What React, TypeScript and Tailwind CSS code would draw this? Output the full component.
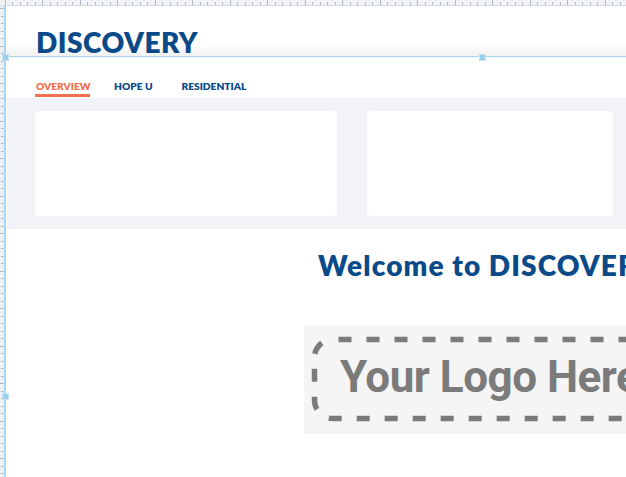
import React from "react";

const BLUE = "#0b4a89";

function TopRuler() {
  const ticks = Array.from({ length: 90 }, (_, i) => i);
  return (
    <svg width="626" height="6" className="block">
      <rect x="0" y="0" width="626" height="6" fill="#f1f3f7" />
      <line x1="0" y1="5.5" x2="626" y2="5.5" stroke="#d6dae3" strokeWidth="1" />
      {ticks.map((i) => {
        const x = 4.5 + i * 7.5;
        const major = i % 5 === 0;
        return (
          <line
            key={i}
            x1={Math.round(x) + 0.5}
            y1={major ? 0 : 2}
            x2={Math.round(x) + 0.5}
            y2={5}
            stroke="#aeb8c9"
            strokeWidth="1"
          />
        );
      })}
    </svg>
  );
}

function LeftRuler() {
  const ticks = Array.from({ length: 64 }, (_, i) => i);
  return (
    <svg width="7" height="471" className="block shrink-0">
      <rect x="0" y="0" width="4" height="471" fill="#eef0f4" />
      <rect x="4" y="0" width="2" height="471" fill="#a8d6f1" />
      {ticks.map((i) => {
        const y = 2 + i * 7.5;
        const major = i % 5 === 0;
        return (
          <line
            key={i}
            x1={major ? 0 : 1}
            y1={Math.round(y) + 0.5}
            x2={3.5}
            y2={Math.round(y) + 0.5}
            stroke="#a9b4c7"
            strokeWidth="1"
          />
        );
      })}
    </svg>
  );
}

function Handle({ className }: { className: string }) {
  return (
    <div
      className={`absolute w-[7px] h-[7px] bg-[#9ccde9] border border-[#c4e3f5] ${className}`}
    />
  );
}

export default function App() {
  return (
    <div
      className="relative w-[626px] h-[477px] overflow-hidden bg-white"
      style={{ fontFamily: "Lato, 'Noto Sans', sans-serif" }}
    >
      <TopRuler />
      <div className="flex">
        <LeftRuler />
        <div className="flex-1 min-w-0 flex flex-col">
          {/* header */}
          <div className="h-[51px] pt-[19px] pl-[29px] border-b border-[#a6d4f0] bg-gradient-to-b from-white from-75% to-[#f2f2f2]">
            <div
              className="text-[28px] leading-[34px] font-extrabold tracking-[0.5px]"
              style={{ color: BLUE }}
            >
              DISCOVERY
            </div>
          </div>
          {/* tabs */}
          <div className="flex pt-[23px] pl-[28px] h-[41px]">
            <div className="flex flex-col w-[55px]">
              <div className="pl-[1px] text-[10.2px] leading-[13px] font-extrabold text-[#f3704f]">
                OVERVIEW
              </div>
              <div className="mt-[1px] h-[3px] bg-[#f3704f]" />
            </div>
            <div
              className="ml-[24px] text-[10.2px] leading-[13px] font-extrabold"
              style={{ color: BLUE }}
            >
              HOPE U
            </div>
            <div
              className="ml-[29px] text-[10.2px] leading-[13px] font-extrabold"
              style={{ color: BLUE }}
            >
              RESIDENTIAL
            </div>
          </div>
          {/* band */}
          <div className="h-[131px] bg-[#f2f3f7] flex items-start pt-[13px] pl-[28px] gap-[30px]">
            <div className="w-[302px] h-[105px] bg-white rounded-[4px]" />
            <div className="w-[246px] h-[105px] bg-white rounded-[4px]" />
          </div>
          {/* welcome */}
          <div
            className="mt-[19px] pl-[311px] whitespace-nowrap text-[28px] leading-[34px] font-extrabold tracking-[1.1px]"
            style={{ color: BLUE }}
          >
            Welcome to DISCOVERY
          </div>
          {/* logo */}
          <div className="mt-[43px] ml-[297px] w-[340px] h-[109px] bg-[#f5f5f5] shrink-0">
            <svg width="340" height="109" className="block">
              <rect
                x="10.5"
                y="14.5"
                width="400"
                height="79"
                rx="18"
                fill="none"
                stroke="#7b7b7b"
                strokeWidth="5.5"
                strokeDasharray="13 15"
                strokeDashoffset="-6"
              />
              <text
                x="36"
                y="67"
                fill="#7b7b7b"
                fontFamily="Roboto, 'Liberation Sans', sans-serif"
                fontWeight="700"
                fontSize="44"
                letterSpacing="-0.5"
              >
                Your Logo Here
              </text>
            </svg>
          </div>
        </div>
      </div>
      <Handle className="left-[2px] top-[54px]" />
      <Handle className="left-[479px] top-[54px]" />
      <Handle className="left-[2px] top-[393px]" />
    </div>
  );
}
